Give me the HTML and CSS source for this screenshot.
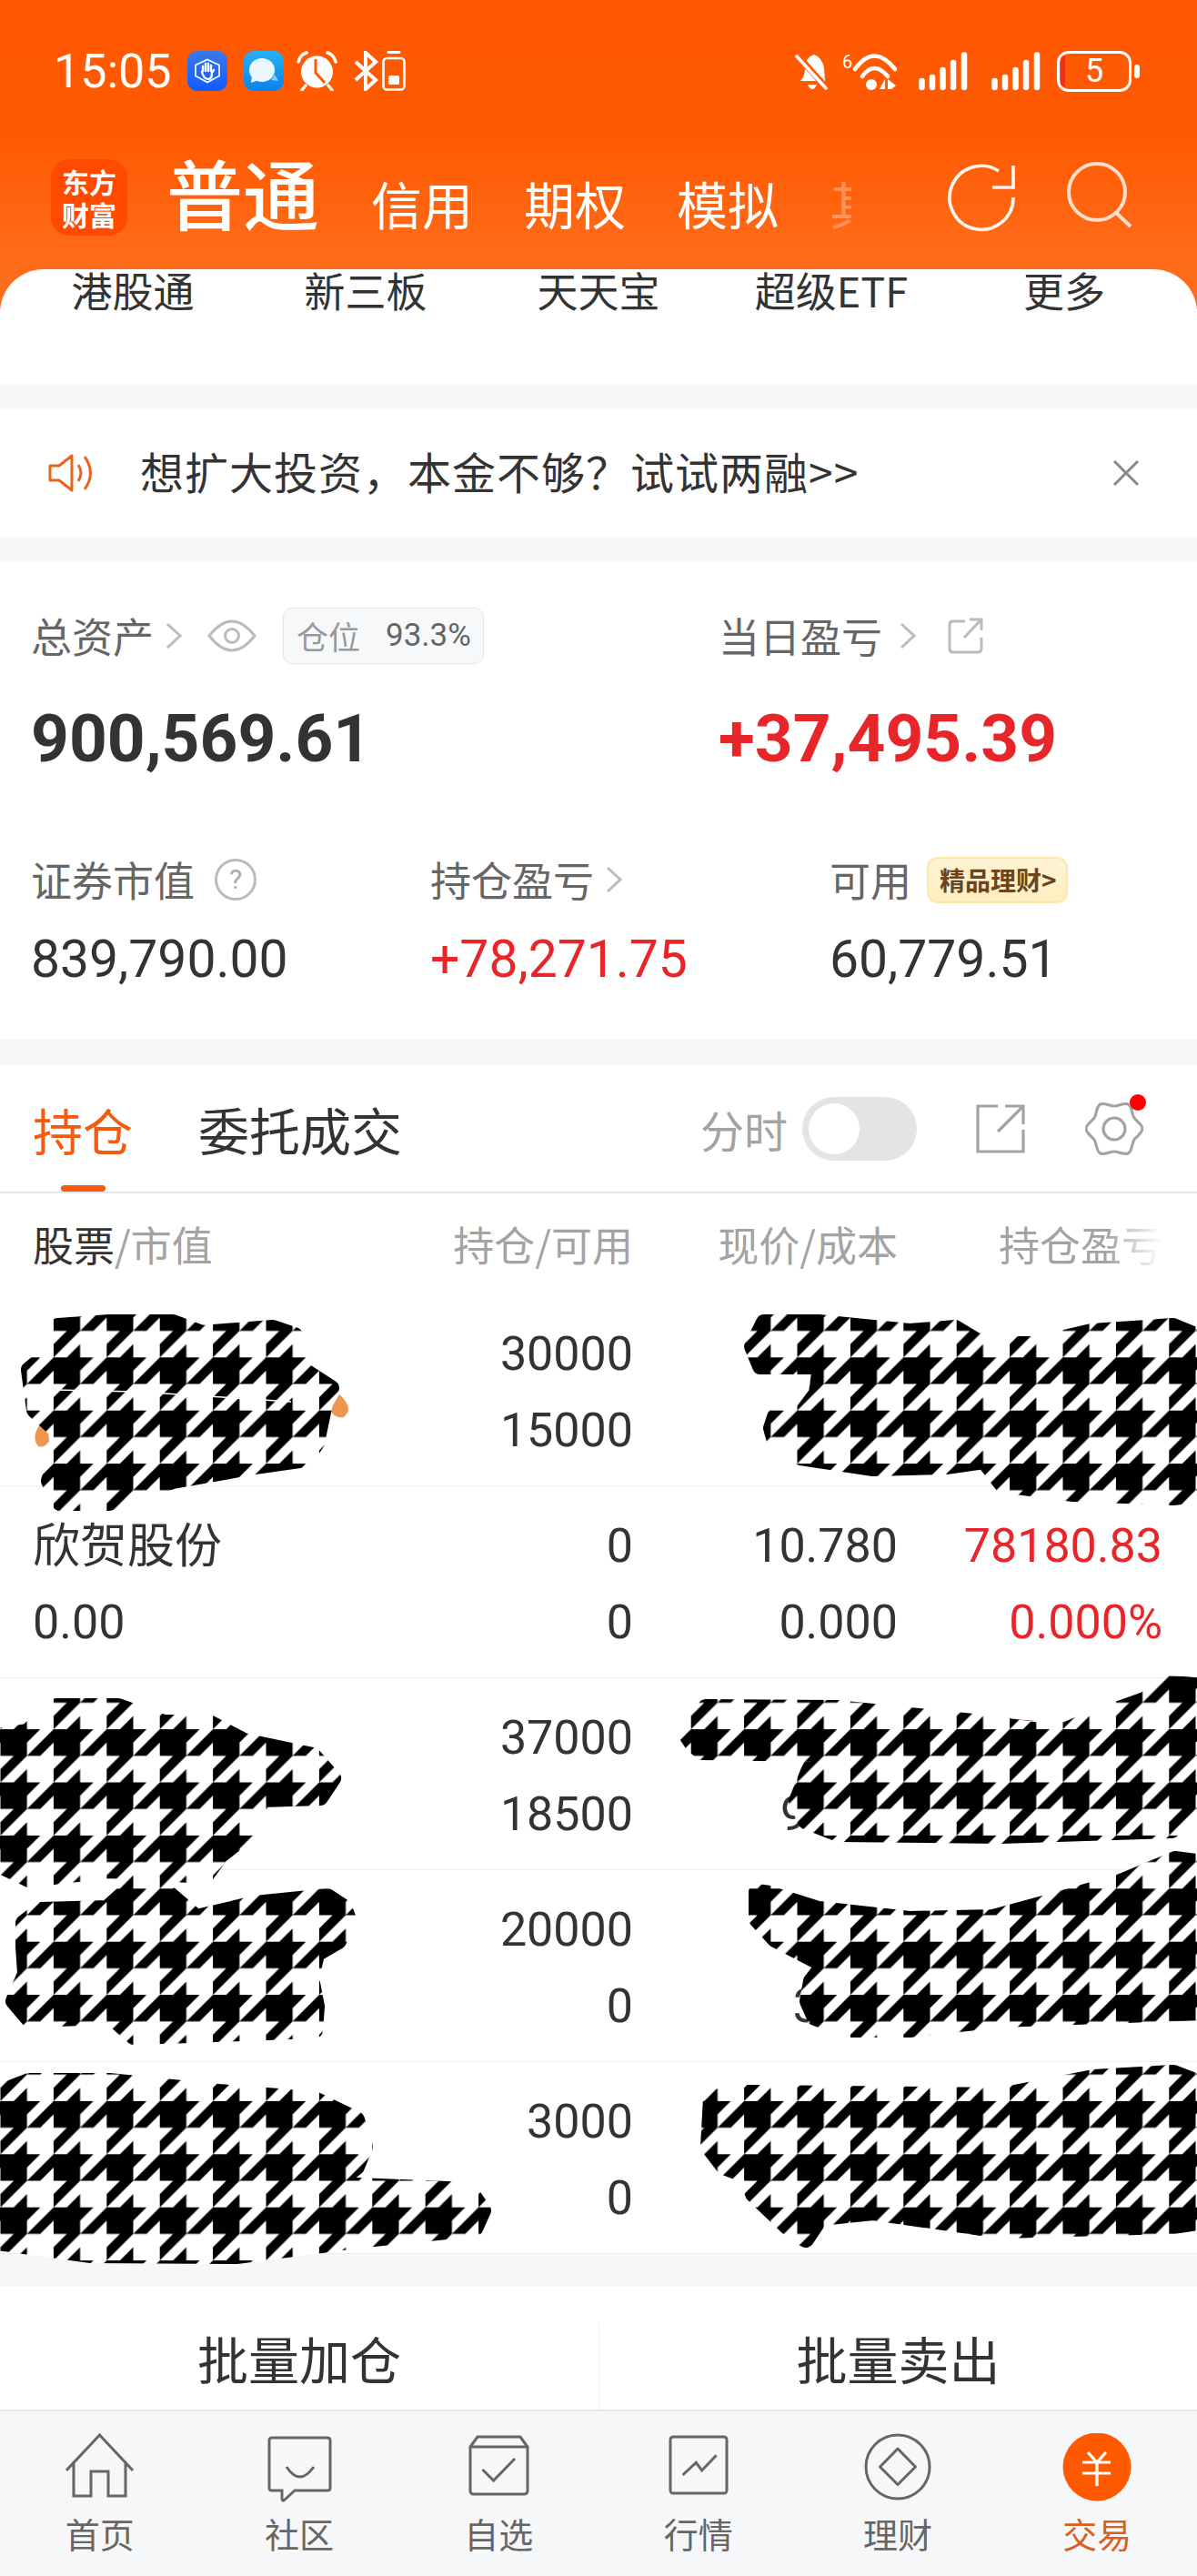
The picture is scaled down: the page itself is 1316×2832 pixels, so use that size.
FILE: index.html
```html
<!DOCTYPE html>
<html lang="zh">
<head>
  <meta charset="utf-8">
  <title>交易</title>
  <link rel="stylesheet" href="styles.css">
</head>
<body>
  <div class="page">
    <header class="header">
      <div class="statusbar">
        <span class="clock">15:05</span>
        <svg class="app-icon first" viewBox="0 0 44 44"><defs><linearGradient id="blueA" x1="0" y1="0" x2="0" y2="1"><stop offset="0" stop-color="#3d78e8"/><stop offset="1" stop-color="#0f5cff"/></linearGradient></defs><rect width="44" height="44" rx="11" fill="url(#blueA)"/><path d="M22 10 L35 16 V28 L22 35 L9 28 V16 Z" transform="translate(0 -0.5)" fill="none" stroke="#fff" stroke-width="1.6"/><path d="M17 22 V17 M20 22 V14 M23 22 V14 M26 22 V16 M16 23 Q18 31 23 31 Q27 31 27 24 L29 21" fill="none" stroke="#fff" stroke-width="2.4" stroke-linecap="round"/></svg>
        <svg class="app-icon second" viewBox="0 0 44 44"><defs><linearGradient id="blueB" x1="0" y1="0" x2="0" y2="1"><stop offset="0" stop-color="#27b0f5"/><stop offset="1" stop-color="#0a82ee"/></linearGradient></defs><rect width="44" height="44" rx="11" fill="url(#blueB)"/><path d="M30 32 L38 33 L34 26 Z" fill="#7fd0fa"/><ellipse cx="20" cy="21" rx="14" ry="13" fill="#eaf7fe"/><path d="M9 27 L8 35 L16 32 Z" fill="#eaf7fe"/></svg>
        <svg class="alarm" viewBox="0 0 45 44"><path d="M2 12 Q4 4 11 2 M43 12 Q41 4 34 2 M10 38 L6 43 M35 38 L39 43" fill="none" stroke="#fff" stroke-width="3.4" stroke-linecap="round"/><circle cx="22.5" cy="23" r="17.5" fill="#fff"/><path d="M21 9 V24 L31 35" fill="none" stroke="#ff5a00" stroke-width="3"/></svg>
        <svg class="bluetooth" viewBox="0 0 28 44"><path d="M3 12 L25 32 L14 42 V2 L25 12 L3 32" fill="none" stroke="#fff" stroke-width="4"/></svg>
        <svg class="phone-battery" viewBox="0 0 26 44"><path d="M7 1.5 H19" stroke="#fff" stroke-width="3" stroke-linecap="round"/><rect x="1.5" y="8" width="23" height="34.5" rx="4" fill="none" stroke="#fff" stroke-width="2.6"/><rect x="7" y="27" width="12" height="10" rx="1.5" fill="#fff"/></svg>
        <div class="status-right">
          <svg class="bell" viewBox="0 0 38 42"><path d="M6 32 Q11 27 11 18 Q11 6 21 3 Q30 6 32 18 L33 32 Z M14 36 H24 Q22 41 19 41 Q16 41 14 36 Z" fill="#fff"/><path d="M3 4 L35 40" stroke="#ff5a00" stroke-width="7"/><path d="M2 5 L34 40" stroke="#fff" stroke-width="3.6" stroke-linecap="round"/></svg>
          <svg class="wifi" viewBox="0 0 60 46"><text x="0" y="20" class="wifi-six">6</text><path d="M14 21 Q35 -8 58 21" fill="none" stroke="#fff" stroke-width="4.6" stroke-linecap="round"/><path d="M22 29 Q35 11 50 29" fill="none" stroke="#fff" stroke-width="4.6" stroke-linecap="round"/><circle cx="32" cy="38" r="6" fill="#fff"/><path d="M47 32 V43 H41 Z M50 32 V43 H54 L59 39 Z" fill="#fff"/></svg>
          <svg class="signal" viewBox="0 0 54 42"><path d="M3.5 32 V39 M15 28 V39 M26.500 20 V39 M38 12 V39 M50 3.500 V39" fill="none" stroke="#fff" stroke-width="6.500" stroke-linecap="round"/></svg>
          <svg class="signal" viewBox="0 0 54 42"><path d="M3.5 32 V39 M15 28 V39 M26.500 20 V39 M38 12 V39 M50 3.500 V39" fill="none" stroke="#fff" stroke-width="6.500" stroke-linecap="round"/></svg>
          <div class="battery"><span class="battery-low"></span>5</div>
          <span class="battery-nub"></span>
        </div>
      </div>
      <nav class="topnav">
        <div class="logo">东方<br>财富</div>
        <div class="account-tabs">
          <span class="account-tab current">普通</span>
          <span class="account-tab">信用</span>
          <span class="account-tab">期权</span>
          <span class="account-tab">模拟</span>
          <span class="account-tab cut">其</span>
        </div>
        <div class="top-actions">
          <svg class="refresh" viewBox="0 0 82 82"><path d="M76 40 A35 35 0 1 1 60 11 M76 5 V29 H53" fill="none" stroke="#fff5ef" stroke-width="3.600"/></svg>
          <svg class="search" viewBox="0 0 76 76"><circle cx="36" cy="34" r="31" fill="none" stroke="#ffdfcc" stroke-width="4"/><path d="M56 56 L73 72" stroke="#ffdfcc" stroke-width="4"/></svg>
        </div>
      </nav>
    </header>

    <div class="quick-menu">
      <span>港股通</span><span>新三板</span><span>天天宝</span><span>超级ETF</span><span>更多</span>
    </div>

    <div class="notice">
      <svg class="speaker" viewBox="0 0 54 46"><path d="M5 15 H15 L29 4 V42 L15 31 H5 Z M36 14 Q42 23 36 32 M43 5 Q56 23 43 41" fill="none" stroke="#e8641e" stroke-width="3" stroke-linejoin="round"/></svg>
      <span class="notice-text">想扩大投资，本金不够？试试两融&gt;&gt;</span>
      <svg class="close" viewBox="0 0 32 32"><path d="M3 3 L29 29 M29 3 L3 29" stroke="#888" stroke-width="3"/></svg>
    </div>

    <section class="assets">
      <div class="asset-top">
        <div>
          <div class="asset-label">
            <span>总资产</span>
            <svg class="chevron" viewBox="0 0 20 30"><path d="M3 2 L17 15 L3 28" fill="none" stroke="#bbb" stroke-width="3"/></svg>
            <svg class="eye" viewBox="0 0 54 36"><path d="M2 18 Q27 -14 52 18 Q27 50 2 18 Z" fill="none" stroke="#bbb" stroke-width="3"/><circle cx="27" cy="18" r="7.500" fill="none" stroke="#bbb" stroke-width="3"/></svg>
            <div class="position-pill"><span class="pill-name">仓位</span><span class="pill-value">93.3%</span></div>
          </div>
          <div class="asset-total">900,569.61</div>
        </div>
        <div>
          <div class="asset-label">
            <span>当日盈亏</span>
            <svg class="chevron day" viewBox="0 0 20 30"><path d="M3 2 L17 15 L3 28" fill="none" stroke="#bbb" stroke-width="3"/></svg>
            <svg class="open-small" viewBox="0 0 40 40"><path d="M19 4 H6 Q2 4 2 8 V34 Q2 38 6 38 H33 Q37 38 37 34 V22 M18 22 L36 3 M24 2 H37 V14" fill="none" stroke="#bbb" stroke-width="3"/></svg>
          </div>
          <div class="asset-total up">+37,495.39</div>
        </div>
      </div>
      <div class="asset-sub">
        <div>
          <div class="asset-label small"><span>证券市值</span><span class="help">?</span></div>
          <div class="asset-value">839,790.00</div>
        </div>
        <div>
          <div class="asset-label small"><span>持仓盈亏</span><svg class="chevron tight" viewBox="0 0 20 30"><path d="M3 2 L17 15 L3 28" fill="none" stroke="#bbb" stroke-width="3"/></svg></div>
          <div class="asset-value up">+78,271.75</div>
        </div>
        <div>
          <div class="asset-label small"><span>可用</span><span class="finance-badge">精品理财&gt;</span></div>
          <div class="asset-value">60,779.51</div>
        </div>
      </div>
    </section>

    <section class="holdings">
      <div class="holding-tabs">
        <span class="holding-tab active">持仓</span>
        <span class="holding-tab">委托成交</span>
        <div class="holding-tools">
          <span class="tool-label">分时</span>
          <span class="toggle"><span class="toggle-knob"></span></span>
          <svg class="open-big" viewBox="0 0 54 54"><path d="M24 2 H2 V52 H52 V28 M24 30 L51 3 M32 2 H52 V22" fill="none" stroke="#a3a3a3" stroke-width="3.200"/></svg>
          <span class="gear-wrap">
            <svg class="gear" viewBox="0 0 64 64"><path d="M32 7 C37 7 43.170 2.650 47.500 5.150 C51.830 7.650 51.150 15.170 53.650 19.500 C56.150 23.830 63 27 63 32 C63 37 56.150 40.170 53.650 44.500 C51.150 48.830 51.830 56.350 47.500 58.850 C43.170 61.350 37 57 32 57 C27 57 20.830 61.350 16.500 58.850 C12.170 56.350 12.850 48.830 10.350 44.500 C7.850 40.170 1 37 1 32 C1 27 7.850 23.830 10.350 19.500 C12.850 15.170 12.170 7.650 16.500 5.150 C20.830 2.650 27 7 32 7 Z" fill="none" stroke="#a3a3a3" stroke-width="3.200"/><circle cx="32" cy="32" r="12" fill="none" stroke="#a3a3a3" stroke-width="3.200"/></svg>
            <span class="gear-dot"></span>
          </span>
        </div>
      </div>

      <div class="table-head">
        <span class="head-name"><b>股票</b>/市值</span>
        <span>持仓/可用</span>
        <span>现价/成本</span>
        <span class="head-fade">持仓盈亏</span>
      </div>

      <div class="table-body">
        <div class="row">
          <span class="name"></span><span class="num">30000</span><span class="num"></span><span class="num"></span>
          <span class="name"></span><span class="num">15000</span><span class="num"></span><span class="num"></span>
        </div>
        <div class="row">
          <span class="name">欣贺股份</span><span class="num">0</span><span class="num">10.780</span><span class="num up">78180.83</span>
          <span class="name figure">0.00</span><span class="num">0</span><span class="num">0.000</span><span class="num up">0.000%</span>
        </div>
        <div class="row">
          <span class="name"></span><span class="num">37000</span><span class="num"></span><span class="num"></span>
          <span class="name figure">3</span><span class="num">18500</span><span class="num peek">9.</span><span class="num"></span>
        </div>
        <div class="row">
          <span class="name"></span><span class="num">20000</span><span class="num"></span><span class="num"></span>
          <span class="name"></span><span class="num">0</span><span class="num peek">3</span><span class="num"></span>
        </div>
        <div class="row">
          <span class="name"></span><span class="num">3000</span><span class="num"></span><span class="num"></span>
          <span class="name"></span><span class="num">0</span><span class="num"></span><span class="num"></span>
        </div>

        <!-- hand scribbles painted over the screenshot, page coordinates -->
        <svg class="scribbles" viewBox="0 1423 1316 1080">
          <defs>
            <pattern id="hound" patternUnits="userSpaceOnUse" x="0.5" y="2368.3" width="58.4" height="58.4">
              <rect width="58.4" height="58.4" fill="#fff"/>
              <path d="M0 0 H43.800 L29.200 14.600 V29.200 H0 Z M29.200 29.200 L58.400 0 V14.600 L43.800 29.200 Z M14.600 29.200 H29.200 L0 58.400 V43.800 Z M29.200 43.800 V58.400 H14.600 Z" fill="#000"/>
            </pattern>
          </defs>
          <path d="M1098 1476 L1106 1471 L1107 1476 Z M1100 1892 Q1120 1889 1138 1892" fill="#d2302c" stroke="none"/>
          <path d="M44 1566 Q34 1580 42 1590 Q54 1594 60 1568 Z M373 1533 L363 1550 Q368 1560 378 1558 Q390 1548 373 1533 Z" fill="#ee9550"/>
          <g class="ink">
            <path d="M64 1458 L120 1454 L190 1454 L222 1466 L300 1460 L324 1468 L333 1506 L364 1526 L358 1538 L348 1586 L336 1604 L280 1612 L190 1628 L120 1652 L66 1652 L54 1628 L64 1596 L62 1572 L38 1550 L32 1506 L56 1486 Z"/>
            <path d="M827 1480 L840 1454 L900 1454 L1000 1464 L1050 1460 L1080 1478 L1140 1478 L1200 1464 L1290 1458 L1324 1472 L1324 1642 L1290 1646 L1180 1642 L1102 1632 L1082 1606 L1040 1612 L960 1614 L880 1602 L852 1584 L848 1570 L852 1558 L880 1556 L898 1532 L902 1502 L836 1502 Z"/>
            <path d="M-10 1910 L30 1904 L62 1876 L130 1876 L180 1894 L230 1894 L268 1914 L344 1930 L366 1955 L352 1976 L288 1978 L272 2016 L242 2040 L226 2062 L120 2056 L32 2066 L-10 2046 Z"/>
            <path d="M26 2114 L44 2100 L118 2098 L160 2060 L216 2108 L280 2093 L360 2085 L378 2097 L383 2110 L372 2134 L348 2148 L342 2175 L348 2206 L346 2232 L210 2237 L147 2239 L122 2217 L32 2220 L15 2200 L28 2170 L26 2140 Z"/>
            <path d="M-10 2304 L32 2288 L120 2288 L240 2300 L346 2308 L392 2330 L401 2360 L392 2382 L368 2402 L516 2408 L531 2430 L522 2450 L400 2462 L260 2480 L100 2479 L-10 2464 Z"/>
            <path d="M754 1906 L776 1877 L920 1878 L1080 1894 L1150 1904 L1172 1902 L1202 1889 L1258 1869 L1288 1851 L1324 1854 L1324 1982 L1288 2012 L1100 2018 L922 2016 L886 2002 L876 1980 L888 1950 L898 1928 L772 1926 L762 1918 Z"/>
            <path d="M832 2080 L846 2082 L900 2099 L1000 2110 L1092 2108 L1162 2089 L1232 2069 L1292 2044 L1324 2048 L1324 2212 L1100 2220 L1000 2231 L932 2231 L896 2218 L888 2200 L892 2178 L906 2160 L852 2132 L832 2110 Z"/>
            <path d="M782 2306 L802 2304 L822 2301 L1100 2304 L1202 2284 L1290 2279 L1324 2292 L1324 2442 L1290 2447 L1100 2452 L960 2432 L902 2438 L886 2462 L874 2456 L828 2412 L822 2392 L796 2382 L779 2360 Z"/>
          </g>
          <path d="M60 1528 L150 1530 L320 1541" fill="none" stroke="#fff" stroke-width="1.500"/>
        </svg>
      </div>
    </section>

    <div class="batch-actions">
      <span class="batch">批量加仓</span>
      <span class="batch">批量卖出</span>
    </div>

    <nav class="tabbar">
      <div class="tab-item">
        <svg viewBox="0 0 76 76"><path d="M1 41 L37.500 2 L74 41 M9 31 V69 H28 V42 H47 V69 H66 V31" fill="none" stroke="#666" stroke-width="3"/></svg>
        <span>首页</span>
      </div>
      <div class="tab-item">
        <svg viewBox="0 0 76 76"><path d="M8 5 H69 Q72 5 72 8 V60 Q72 63 69 63 H33 L21 74 Q19 75 19 71 V63 H8 Q5 63 5 60 V8 Q5 5 8 5 Z M24 37 Q38.500 59 54 37" fill="none" stroke="#666" stroke-width="3"/></svg>
        <span>社区</span>
      </div>
      <div class="tab-item">
        <svg viewBox="0 0 76 76"><path d="M7 15 L15 4 H62 L70 15 V63 Q70 67 66 67 H11 Q7 67 7 63 Z M7 15 H70 M20.500 40 L32.600 52 L56 28" fill="none" stroke="#666" stroke-width="3"/></svg>
        <span>自选</span>
      </div>
      <div class="tab-item">
        <svg viewBox="0 0 76 76"><rect x="7" y="4" width="62" height="62" rx="3" fill="none" stroke="#666" stroke-width="3"/><path d="M20.600 46 L35.300 32.300 L41.600 41 L57.600 24.300" fill="none" stroke="#666" stroke-width="3"/></svg>
        <span>行情</span>
      </div>
      <div class="tab-item">
        <svg viewBox="0 0 76 76"><circle cx="38" cy="37" r="35" fill="none" stroke="#666" stroke-width="3"/><path d="M38 17 L57.500 37 L38 56.500 L18.500 37 Z" fill="none" stroke="#666" stroke-width="3" stroke-linejoin="round"/></svg>
        <span>理财</span>
      </div>
      <div class="tab-item active">
        <svg viewBox="0 0 76 76"><circle cx="38" cy="37" r="37.500" fill="#ff5a00"/><path d="M28 21 L38 32 L48 21 M22 32 H53 M22 44 H53 M38 32 V58" fill="none" stroke="#fff" stroke-width="3.200"/></svg>
        <span>交易</span>
      </div>
    </nav>
  </div>
</body>
</html>
```
FILE: styles.css
```css
* {
  box-sizing: border-box;
  margin: 0;
  padding: 0;
}

body {
  font-family: "Noto Sans CJK SC", Roboto, sans-serif;
  background-color: #f6f7f9;
  color: #333;
}

svg {
  display: block;
  flex: none;
}

.page {
  width: 1316px;
  height: 2832px;
  overflow: hidden;
}

/* header */
.header {
  height: 340px;
  margin-bottom: -44px;
  background: linear-gradient(#ff5800 0, #ff5a02 150px, #ff6d1c 296px);
  color: #fff;
}

.statusbar {
  display: flex;
  align-items: center;
  height: 156px;
  padding: 0 63px 0 59px;
}

.clock {
  width: 147px;
  font-family: Roboto, sans-serif;
  font-size: 52px;
}

.app-icon {
  width: 44px;
  height: 44px;
}

.app-icon.second {
  margin-left: 18px;
}

.alarm {
  width: 45px;
  height: 44px;
  margin-left: 14px;
}

.bluetooth {
  width: 28px;
  height: 44px;
  margin-left: 17px;
}

.phone-battery {
  width: 26px;
  height: 44px;
  margin-left: 4px;
}

.status-right {
  display: flex;
  align-items: center;
  margin-left: auto;
}

.bell {
  width: 38px;
  height: 42px;
  margin-right: 14px;
}

.wifi {
  width: 60px;
  height: 46px;
  margin-right: 24px;
}

.wifi-six {
  fill: #fff;
  font-family: Roboto, sans-serif;
  font-size: 20px;
}

.signal {
  width: 54px;
  height: 42px;
  margin-right: 26px;
}

.signal + .signal {
  margin-right: 18px;
}

.battery {
  position: relative;
  width: 82px;
  height: 45px;
  border: 3px solid #fff;
  border-radius: 13px;
  font-family: Roboto, sans-serif;
  font-size: 36px;
  line-height: 39px;
  text-align: center;
}

.battery-low {
  position: absolute;
  top: 2px;
  left: 1px;
  width: 5px;
  height: 35px;
  border-radius: 5px 0 0 5px;
  background-color: #f0301a;
}

.battery-nub {
  width: 6px;
  height: 15px;
  margin-left: 3px;
  border-radius: 3px;
  background-color: #fff;
}

.topnav {
  display: flex;
  padding: 19px 70px 0 56px;
}

.logo {
  width: 84px;
  height: 84px;
  margin-right: 43px;
  padding-top: 6px;
  border-radius: 20px;
  background-color: #ff4a00;
  font-size: 30px;
  font-weight: 700;
  line-height: 36px;
  text-align: center;
}

.account-tabs {
  display: flex;
  align-items: baseline;
  gap: 56px;
  height: 84px;
  margin-top: -3px;
}

.account-tab {
  font-size: 56px;
  line-height: 78px;
}

.account-tab.current {
  font-size: 84px;
  font-weight: 500;
  margin-right: 1px;
}

.account-tab.cut {
  width: 24px;
  overflow: hidden;
  opacity: 0.3;
}

.top-actions {
  display: flex;
  gap: 50px;
  margin-left: auto;
  margin-top: 2px;
}

.refresh {
  width: 82px;
  height: 82px;
}

.search {
  width: 76px;
  height: 76px;
}

/* quick menu */
.quick-menu {
  display: grid;
  grid-template-columns: repeat(5, 256px);
  position: relative;
  height: 126px;
  padding: 0 18px;
  border-radius: 48px 48px 0 0;
  background-color: #fff;
  font-size: 45px;
  line-height: 46px;
  text-align: center;
}

/* notice */
.notice {
  display: flex;
  align-items: center;
  height: 140px;
  margin-top: 28px;
  padding: 0 62px 0 50px;
  background-color: #fff;
}

.speaker {
  width: 54px;
  height: 46px;
}

.notice-text {
  margin: -6px 0 0 50px;
  font-size: 48px;
  letter-spacing: 1px;
}

.close {
  width: 32px;
  height: 32px;
  margin-left: auto;
}

/* assets */
.assets {
  height: 525px;
  margin-top: 28px;
  padding: 58px 0 0 34px;
  background-color: #fff;
}

.asset-top {
  display: grid;
  grid-template-columns: 756px 1fr;
}

.asset-sub {
  display: grid;
  grid-template-columns: 439px 439px 1fr;
  margin-top: 90px;
}

.asset-label {
  display: flex;
  align-items: center;
  height: 46px;
  color: #666;
  font-size: 45px;
  line-height: 46px;
}

.asset-label.small {
  height: 50px;
  line-height: 50px;
}

.chevron {
  width: 20px;
  height: 30px;
  margin-left: 12px;
}

.chevron.day {
  margin-left: 18px;
}

.chevron.tight {
  margin-left: 12px;
}

.eye {
  width: 54px;
  height: 36px;
  margin-left: 27px;
}

.open-small {
  width: 40px;
  height: 40px;
  margin-left: 34px;
}

.position-pill {
  display: flex;
  align-items: center;
  width: 221px;
  height: 62px;
  margin-left: 29px;
  padding-left: 14px;
  border: 1px solid #e6e6e6;
  border-radius: 10px;
  background-color: #f7f8fa;
  font-size: 35px;
}

.pill-name {
  color: #999;
}

.pill-value {
  margin-left: 28px;
  font-family: Roboto, sans-serif;
  color: #666;
}

.asset-total {
  margin-top: 50px;
  font-family: Roboto, sans-serif;
  font-size: 73px;
  font-weight: 700;
  line-height: 80px;
}

.up {
  color: #e8262a;
}

.asset-value {
  margin-top: 28px;
  font-family: Roboto, sans-serif;
  font-size: 57px;
  line-height: 70px;
}

.help {
  width: 46px;
  height: 46px;
  margin-left: 22px;
  border: 3px solid #bbb;
  border-radius: 50%;
  color: #aaa;
  font-family: Roboto, sans-serif;
  font-size: 30px;
  line-height: 40px;
  text-align: center;
}

.finance-badge {
  height: 51px;
  margin-left: 17px;
  padding: 0 10px 0 12px;
  border: 2px solid #fbe9a8;
  border-radius: 12px;
  background: linear-gradient(#fdf3d4, #ffefc0);
  color: #6b4420;
  font-size: 28px;
  font-weight: 700;
  line-height: 46px;
  white-space: nowrap;
}

/* holdings */
.holdings {
  margin-top: 28px;
  background-color: #fff;
}

.holding-tabs {
  display: flex;
  align-items: center;
  height: 141px;
  padding: 0 59px 0 36px;
  border-bottom: 2px solid #e6e6e6;
  font-size: 55px;
}

.holding-tab {
  position: relative;
  margin-right: 72px;
}

.holding-tab + .holding-tab {
  font-size: 56px;
}

.holding-tab.active {
  color: #f65a10;
}

.holding-tab.active::after {
  content: '';
  position: absolute;
  left: 31px;
  bottom: -29px;
  width: 49px;
  height: 7px;
  border-radius: 4px;
  background-color: #f65a10;
}

.holding-tools {
  display: flex;
  align-items: center;
  margin-left: auto;
}

.tool-label {
  color: #a3a3a3;
  font-size: 48px;
}

.toggle {
  width: 126px;
  height: 70px;
  margin-left: 16px;
  padding: 7px;
  border-radius: 35px;
  background-color: #e3e4e6;
}

.toggle-knob {
  display: block;
  width: 56px;
  height: 56px;
  border-radius: 50%;
  background-color: #fff;
}

.open-big {
  width: 54px;
  height: 54px;
  margin-left: 65px;
}

.gear-wrap {
  position: relative;
  margin-left: 66px;
}

.gear {
  width: 64px;
  height: 64px;
}

.gear-dot {
  position: absolute;
  top: -6px;
  right: -3px;
  width: 18px;
  height: 18px;
  border-radius: 50%;
  background-color: #f00;
}

.table-head {
  display: grid;
  grid-template-columns: 1fr 291px 291px 291px;
  align-items: center;
  height: 111px;
  padding: 0 38px 0 36px;
  color: #a3a3a3;
  font-size: 45px;
  text-align: right;
}

.head-name {
  text-align: left;
}

.head-name b {
  color: #333;
  font-weight: 400;
}

.head-fade {
  -webkit-mask-image: linear-gradient(to right, #000 0, #000 65%, transparent 100%);
  mask-image: linear-gradient(to right, #000 0, #000 65%, transparent 100%);
  justify-self: end;
}

.table-body {
  position: relative;
}

.row {
  display: grid;
  grid-template-columns: 1fr 291px 291px 291px;
  grid-template-rows: 84px 84px;
  align-content: center;
  height: 211px;
  padding: 6px 38px 0 36px;
  border-bottom: 1px solid #eee;
}

.name {
  font-size: 52px;
  line-height: 76px;
}

.name.figure,
.num {
  font-family: Roboto, sans-serif;
  font-size: 52px;
  line-height: 84px;
}

.num {
  text-align: right;
}

.num.peek {
  padding-right: 86px;
}

.scribbles {
  position: absolute;
  top: 0;
  left: 0;
  width: 1316px;
  height: 1080px;
  overflow: visible;
}

.ink path {
  fill: url(#hound);
  stroke: url(#hound);
  stroke-width: 18;
  stroke-linejoin: round;
}

/* batch buttons */
.batch-actions {
  display: grid;
  grid-template-columns: 1fr 1fr;
  height: 136px;
  margin-top: 35px;
  padding-top: 41px;
  background-color: #fff;
}

.batch {
  padding-bottom: 20px;
  font-size: 56px;
  line-height: 75px;
  text-align: center;
}

.batch + .batch {
  border-left: 1px solid #f1f1f1;
}

/* bottom tab bar */
.tabbar {
  display: grid;
  grid-template-columns: repeat(6, 1fr);
  height: 183px;
  padding-top: 24px;
  border-top: 2px solid #e6e6e6;
  background-color: #f6f7f9;
}

.tab-item {
  display: flex;
  flex-direction: column;
  align-items: center;
  color: #666;
  font-size: 38px;
  line-height: 48px;
}

.tab-item svg {
  width: 76px;
  height: 76px;
  margin-bottom: 10px;
}

.tab-item.active {
  color: #d9601f;
}
```
